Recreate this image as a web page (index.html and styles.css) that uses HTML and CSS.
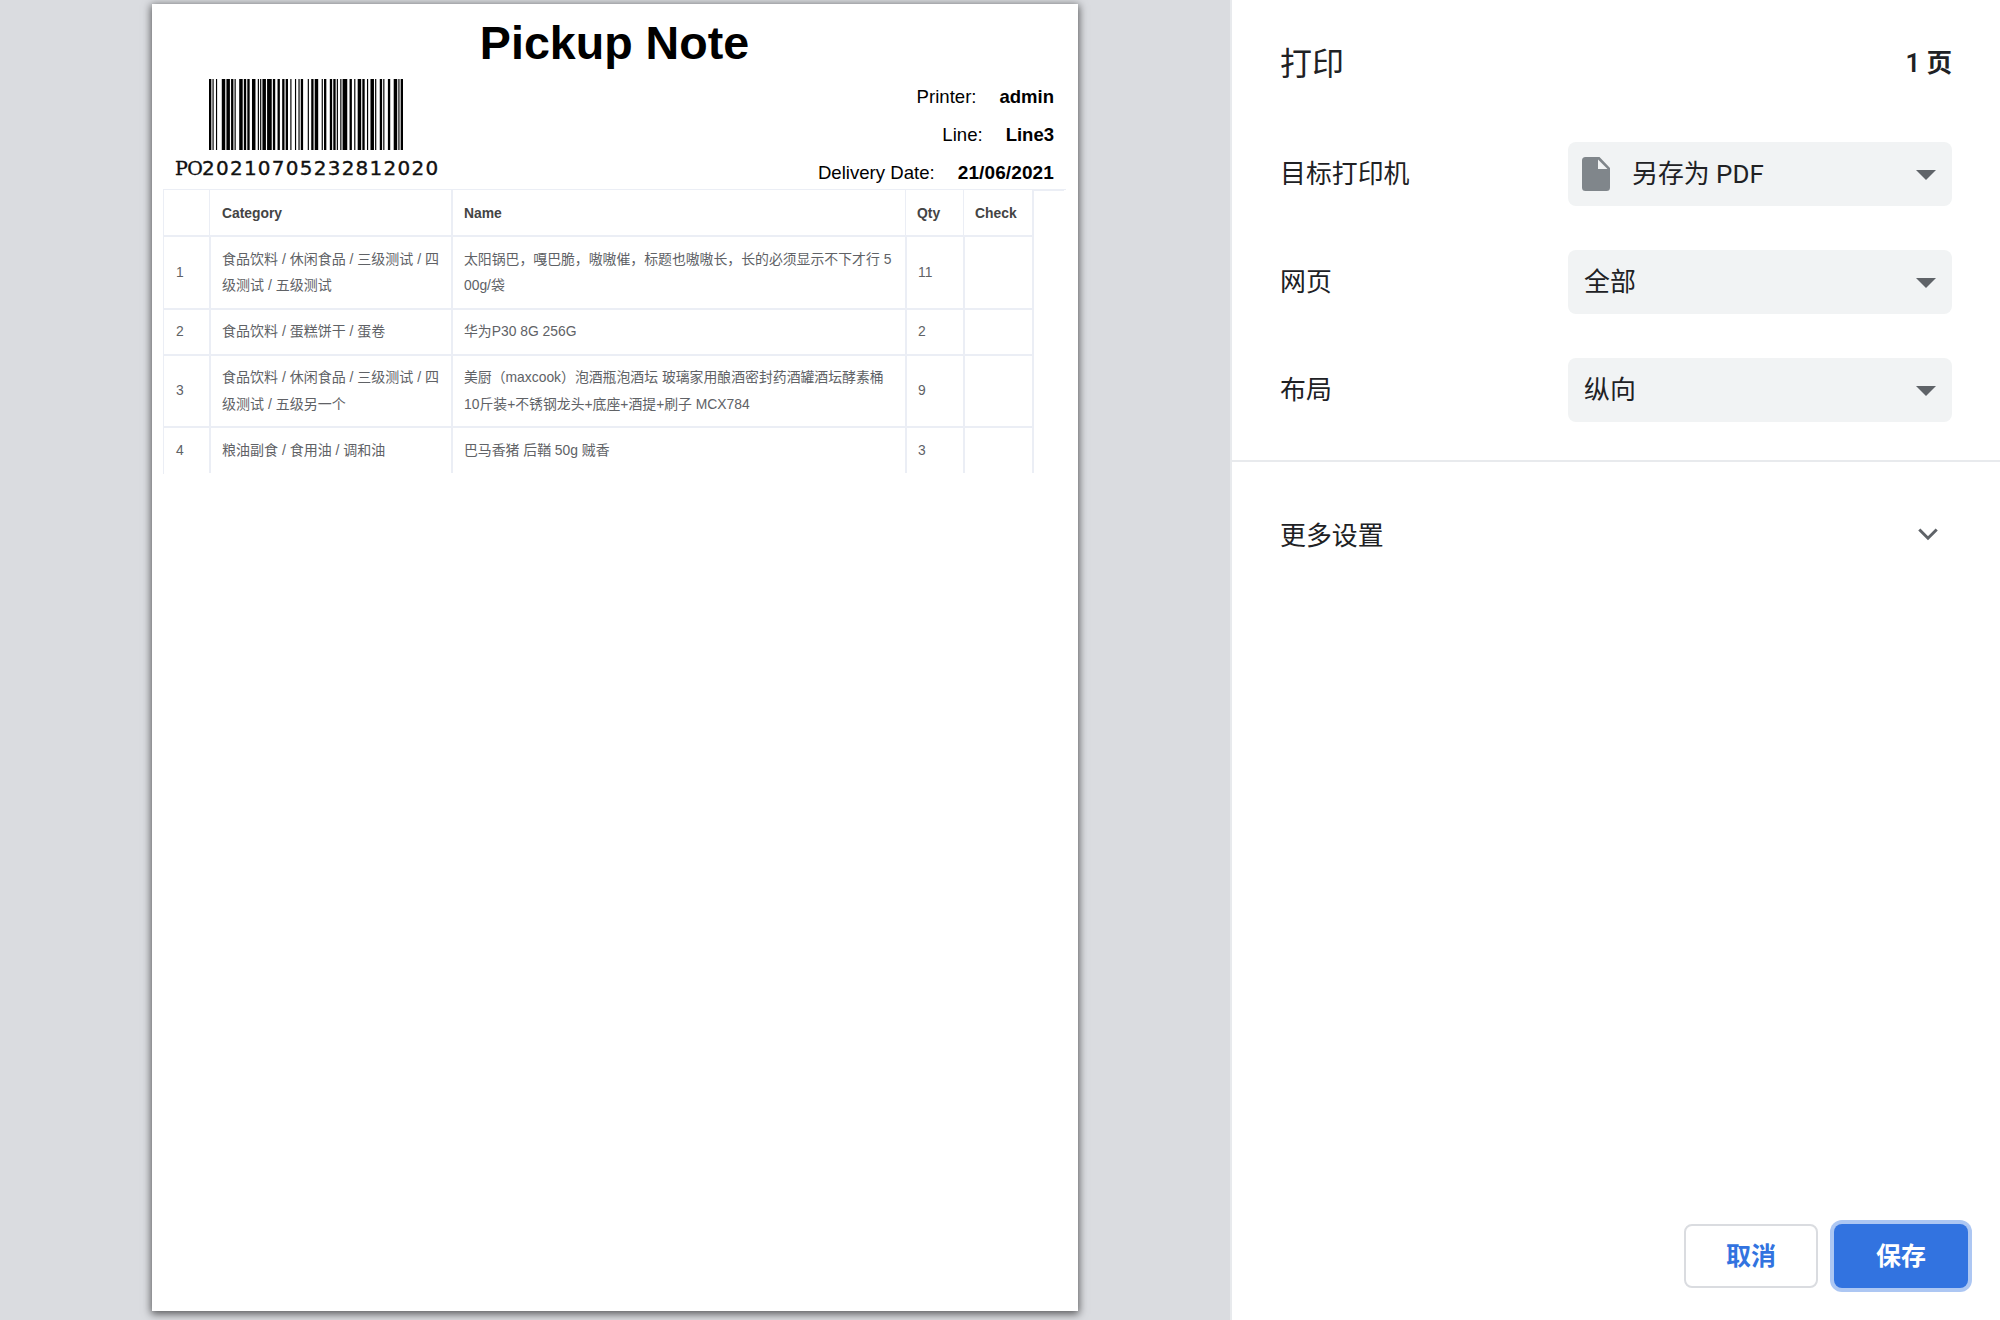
FILE: index.html
```html
<!DOCTYPE html>
<html lang="zh-CN">
<head>
<meta charset="utf-8">
<title>打印</title>
<link rel="stylesheet" href="styles.css">
</head>
<body>
<div class="dialog">
  <main class="preview">
    <article class="paper">
      <h1 class="title">Pickup Note</h1>
      <div class="head">
        <div class="code">
          <svg class="bars" viewBox="0 0 167 71" preserveAspectRatio="none" aria-hidden="true">
            <line x1="0" y1="35.5" x2="167" y2="35.5" stroke="#000" stroke-width="71" stroke-dasharray="2 1 1 2 1 4 3 1 3 1 2 1 1 3 3 1 2 1 2 2 3 2 1 1 1 1 3 1 4 1 2 2 2 2 2 1 2 2 1 3 1 2 1 1 2 4 1 2 2 1 3 3 1 1 2 3 2 1 2 1 1 2 1 1 4 2 2 2 1 2 3 1 2 2 1 2 3 1 1 3 2 1 1 3 2 3 3 1 1 1 2 0"/>
          </svg>
          <div class="code-text"><span class="prefix">PO</span><span>20210705232812020</span></div>
        </div>
        <dl class="info">
          <div class="info-row"><dt>Printer:</dt><dd>admin</dd></div>
          <div class="info-row"><dt>Line:</dt><dd>Line3</dd></div>
          <div class="info-row"><dt>Delivery Date:</dt><dd class="date">21/06/2021</dd></div>
        </dl>
      </div>
      <div class="table">
        <div class="row header"><div class="thin"></div><div>Category</div><div class="thin">Name</div><div class="thin">Qty</div><div>Check</div><i class="tail"></i></div>
        <div class="row tall"><div>1</div><div class="category">食品饮料 / 休闲食品 / 三级测试 / 四<br>级测试 / 五级测试</div><div>太阳锅巴，嘎巴脆，嗷嗷催，标题也嗷嗷长，长的必须显示不下才行 5<br>00g/袋</div><div>11</div><div></div></div>
        <div class="row"><div>2</div><div class="category">食品饮料 / 蛋糕饼干 / 蛋卷</div><div>华为P30 8G 256G</div><div>2</div><div></div></div>
        <div class="row tall third"><div>3</div><div class="category">食品饮料 / 休闲食品 / 三级测试 / 四<br>级测试 / 五级另一个</div><div>美厨（maxcook）泡酒瓶泡酒坛 玻璃家用酿酒密封药酒罐酒坛酵素桶<br>10斤装+不锈钢龙头+底座+酒提+刷子 MCX784</div><div>9</div><div></div></div>
        <div class="row last"><div>4</div><div class="category">粮油副食 / 食用油 / 调和油</div><div>巴马香猪 后鞧 50g 贼香</div><div>3</div><div></div></div>
      </div>
    </article>
  </main>
  <aside class="sidebar">
    <header class="side-head"><h2>打印</h2><span class="pages">1 页</span></header>
    <section class="settings">
      <div class="setting"><label>目标打印机</label>
        <div class="select"><svg class="file" viewBox="0 0 28 34"><path d="M3.500 0H17.500L28 11v19.500a3.500 3.500 0 0 1-3.500 3.500h-21A3.500 3.500 0 0 1 0 30.500v-27A3.500 3.500 0 0 1 3.500 0z" fill="#80868b"/><path d="M16 2.500V12h9.500z" fill="#f1f3f4"/></svg><span>另存为 PDF</span><svg class="arrow" viewBox="0 0 20 10"><path d="M0 0h20L10 10z" fill="#5f6368"/></svg></div>
      </div>
      <div class="setting"><label>网页</label>
        <div class="select"><span>全部</span><svg class="arrow" viewBox="0 0 20 10"><path d="M0 0h20L10 10z" fill="#5f6368"/></svg></div>
      </div>
      <div class="setting"><label>布局</label>
        <div class="select"><span>纵向</span><svg class="arrow" viewBox="0 0 20 10"><path d="M0 0h20L10 10z" fill="#5f6368"/></svg></div>
      </div>
    </section>
    <div class="more"><span>更多设置</span><svg class="chevron" viewBox="0 0 20 13"><path d="M1.300 1.500 10 10.200l8.700-8.700" fill="none" stroke="#5f6368" stroke-width="3"/></svg></div>
    <footer class="actions"><button class="btn cancel">取消</button><button class="btn save">保存</button></footer>
  </aside>
</div>
</body>
</html>
```
FILE: styles.css
```css
* { box-sizing: border-box; }
body { margin: 0; background: #dadce0; overflow: hidden; }
.dialog { display: flex; width: 2000px; height: 1320px; }

/* Page preview */
.preview { flex: 1; padding: 4px 0 0 152px; background: #dadce0; }
.paper {
  width: 926px; height: 1307px; background: #fff;
  box-shadow: 0 2px 8px 1px rgba(0, 0, 0, .6);
  font-family: "Liberation Sans", "Noto Sans CJK SC", sans-serif; color: #000;
}
.title { margin: 0; height: 75px; padding: 12px 1px 0 0; font-size: 46.6px; line-height: 54px; text-align: center; }
.head { display: flex; justify-content: space-between; height: 110px; padding: 0 24px 0 23px; }
.bars { display: block; width: 194px; height: 71px; margin-left: 34px; }
.code-text {
  display: flex; margin-top: 6px; font-family: "DejaVu Sans", sans-serif; font-size: 20px; line-height: 24px;
  letter-spacing: 1.24px; white-space: nowrap; color: #111; -webkit-text-stroke: .35px #111;
}
.prefix { width: 27px; font-family: "DejaVu Serif", serif; font-size: 19px; letter-spacing: -.6px; }
.info { margin: -1px 0 0; }
.info-row { display: flex; justify-content: flex-end; gap: 23px; height: 38px; font-size: 18.6px; line-height: 38px; }
.info-row dd { margin: 0; font-weight: 700; font-size: 18.5px; }
.info-row .date { font-size: 19px; letter-spacing: .12px; }

/* Order lines */
.table { width: 903px; height: 285px; margin-left: 11px; border-top: 1px solid #ebeef5; border-left: 1px solid #ebeef5; }
.row { display: grid; grid-template-columns: 47px 242px 454px 58px 69px; height: 46px; font-size: 13.87px; line-height: 26.4px; color: #606266; }
.row > div { display: flex; align-items: center; padding: 0 0 1px 11px; border-right: 2px solid #ebeef5; border-bottom: 2px solid #ebeef5; white-space: nowrap; }
.row > div:first-child { padding-left: 12px; }
.row > .category { font-size: 14px; }
.row.header { grid-template-columns: 46px 243px 453px 58px 70px 30px; height: 47px; font-weight: 700; color: #444; }
.row.header > div { padding: 2px 0 0 11px; }
.row.header > .thin { border-right-width: 1px; }
.row.header > div:nth-child(2) { padding-left: 12px; }
.tail { border-top: 1px solid #ebeef5; }
.row.tall { height: 73px; }
.row.third { height: 72px; }
.row.last { height: 45px; }
.row.last > div { border-bottom: 0; }

/* Print settings */
.sidebar {
  display: flex; flex-direction: column; width: 770px; background: #fff; border-left: 2px solid #e8eaed;
  font-family: Roboto, "Noto Sans CJK SC", sans-serif; font-size: 25.9px; color: #202124;
}
.side-head { display: flex; align-items: center; justify-content: space-between; height: 124px; padding: 0 48px 3px; }
.side-head h2 { margin: 0; font-size: 32px; font-weight: 400; }
.pages { font-weight: 600; font-size: 25.6px; }
.settings { display: flex; flex-direction: column; gap: 44px; height: 338px; padding: 18px 48px 0; border-bottom: 2px solid #e8eaed; }
.setting { display: flex; align-items: center; justify-content: space-between; height: 64px; }
.setting label, .select span { padding-bottom: 5px; }
.select { display: flex; align-items: center; width: 384px; height: 64px; padding: 0 16px; border-radius: 8px; background: #f1f3f4; }
.file { width: 28px; height: 34px; margin: 0 22px 0 -2px; }
.arrow { width: 20px; height: 10px; margin: 1px 0 0 auto; }
.more { display: flex; align-items: center; justify-content: space-between; height: 144px; padding: 0 62px 0 48px; }
.more span { padding-bottom: 2px; }
.chevron { width: 20px; height: 13px; }
.actions { display: flex; justify-content: flex-end; gap: 16px; margin-top: auto; padding: 0 32px 32px; }
.btn { width: 134px; height: 64px; padding: 0 0 5px; border-radius: 8px; font: 700 25px Roboto, "Noto Sans CJK SC", sans-serif; }
.cancel { border: 2px solid #dadce0; background: #fff; color: #3273e0; }
.save { border: 0; background: #3273e0; color: #fff; box-shadow: 0 0 0 4px #adc7f3; }
```
